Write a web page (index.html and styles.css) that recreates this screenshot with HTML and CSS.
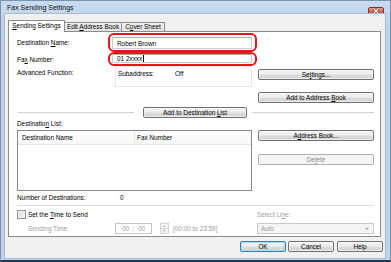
FILE: index.html
```html
<!DOCTYPE html>
<html>
<head>
<meta charset="utf-8">
<link rel="stylesheet" href="styles.css">
</head>
<body>
<div class="window">
  <div class="titlebar">
    <span class="title">Fax Sending Settings</span>
    <span class="close">
      <svg width="16" height="8" viewBox="0 0 16 8">
        <defs><linearGradient id="cg" x1="0" y1="0" x2="0" y2="1"><stop offset="0" stop-color="#e9a99c"/><stop offset="0.5" stop-color="#d66a5a"/><stop offset="1" stop-color="#c44a3a"/></linearGradient></defs>
        <rect x="0.5" y="0.5" width="15" height="7" rx="1.5" fill="url(#cg)" stroke="#7a3630"/>
        <path d="M6 2 L10 6 M10 2 L6 6" stroke="#3d1a16" stroke-width="2.2"/>
        <path d="M6 2 L10 6 M10 2 L6 6" stroke="#ffffff" stroke-width="1.2"/>
      </svg>
    </span>
  </div>
  <div class="frame-body">
    <div class="client">
      <div class="tabs">
        <div class="tab active"><u>S</u>ending Settings</div>
        <div class="tab t2">Edit <u>A</u>ddress Book</div>
        <div class="tab t3">C<u>o</u>ver Sheet</div>
      </div>
      <div class="panel">
        <div class="top">
          <div class="top-left">
            <div class="row row1">
              <span class="lbl l91">Destination <u>N</u>ame:</span>
              <div class="hl hl1"><div class="input in1"><span>Robert Brown</span></div></div>
            </div>
            <div class="row row2">
              <span class="lbl l91">Fa<u>x</u> Number:</span>
              <div class="hl hl2"><div class="input in2"><span>01 2xxxx</span><span class="caret"></span></div></div>
            </div>
            <div class="row row3">
              <span class="lbl l98 pt">Advanced Function:</span>
              <div class="static"><span class="sub">Subaddress:</span><span>Off</span></div>
            </div>
          </div>
          <div class="top-right">
            <div class="btn"><span>Se<u>t</u>tings...</span></div>
            <div class="btn mt12"><span>Add to Address <u>B</u>ook</span></div>
          </div>
        </div>
        <div class="sep-row">
          <div class="line l1"></div>
          <div class="btn wide"><span>Add to Destination <u>L</u>ist</span></div>
          <div class="line l2"></div>
        </div>
        <div class="dl-label">Destinatio<u>n</u> List:</div>
        <div class="list-row">
          <div class="list">
            <div class="list-head">
              <span class="col1">Destination Name</span>
              <span class="col2">Fax Number</span>
            </div>
          </div>
          <div class="list-btns">
            <div class="btn"><span>A<u>d</u>dress Book...</span></div>
            <div class="btn disabled mt13"><span>De<u>l</u>ete</span></div>
          </div>
        </div>
        <div class="count-row"><span class="l103">Number of Destinations:</span><span>0</span></div>
        <div class="hsep"></div>
        <div class="bottom">
          <div class="bottom-left">
            <div class="check-row"><span class="check"></span><span>Set the <u>T</u>ime to Send</span></div>
            <div class="time-row">
              <span class="gray l98i">Sending Time:</span>
              <div class="timebox"><span>00 &nbsp;:&nbsp; 00</span></div>
              <div class="spin"><span class="up"></span><span class="dn"></span></div>
              <span class="gray range">[00:00 to 23:59]</span>
            </div>
          </div>
          <div class="bottom-right">
            <div class="gray sl">Select Li<u>n</u>e:</div>
            <div class="select"><span>Auto</span><span class="arrow"></span></div>
          </div>
        </div>
      </div>
      <div class="footer">
        <div class="btn fbtn ok"><span>OK</span></div>
        <div class="btn fbtn"><span>Cancel</span></div>
        <div class="btn fbtn help"><span>Help</span></div>
      </div>
    </div>
  </div>
</div>
</body>
</html>
```
FILE: styles.css
```css
* { box-sizing: border-box; margin: 0; padding: 0; }
html, body { width: 391px; height: 262px; overflow: hidden; }
body {
  font-family: "Liberation Sans", Arial, sans-serif;
  font-size: 6.4px;
  color: #000;
  background: #fff;
}
u { text-decoration: underline; text-underline-offset: 1px; text-decoration-thickness: 0.6px; }

.window {
  width: 391px;
  height: 262px;
  display: flex;
  flex-direction: column;
  border: 1px solid #7d92ad;
  border-bottom: 2px solid #1f3550;
  background: linear-gradient(#c8dbf0, #bcd1ea 30px, #bfd3eb);
}
.titlebar {
  height: 13px;
  display: flex;
  align-items: flex-start;
  flex: none;
}
.title {
  padding-left: 6px;
  padding-top: 3px;
  font-size: 7px;
  line-height: 8px;
  color: #111;
}
.close {
  margin-left: auto;
  margin-right: 6px;
  margin-top: 6px;
  height: 8px;
  display: block;
}
.close svg { display: block; }

.frame-body {
  flex: 1;
  display: flex;
  padding: 0 5px 2px 4px;
}
.client {
  flex: 1;
  background: #f0f0f0;
  padding: 6px 0 0 3px;
  display: flex;
  flex-direction: column;
  box-shadow: 0 0 0 1px #a9bcd3;
}

.tabs {
  display: flex;
  align-items: flex-end;
  height: 11px;
  position: relative;
  z-index: 1;
}
.tab {
  height: 9px;
  line-height: 8px;
  text-align: center;
  border: 1px solid #898c95;
  border-bottom: none;
  background: linear-gradient(#f3f3f3, #e3e3e3);
  border-radius: 1px 1px 0 0;
}
.tab.active {
  width: 57px;
  height: 12px;
  line-height: 10px;
  margin-bottom: -1px;
  background: #fff;
}
.tab.t2 { width: 57px; border-left: none; }
.tab.t3 { width: 43px; border-left: none; }

.panel {
  width: 373px;
  height: 206px;
  border: 1px solid #898c95;
  background: #fff;
  padding: 1px 6px 0 8px;
}

.top { display: flex; }
.top-left { width: 240px; }
.top-right { width: 116px; margin-left: 1px; padding-top: 36px; }
.row { display: flex; align-items: center; }
.row1 { height: 19px; }
.row2 { height: 14px; }
.row3 { height: 21px; align-items: flex-start; }
.lbl { flex: none; }
.l91 { width: 91px; }
.l98 { width: 98px; }
.pt { padding-top: 3px; }
.hl {
  width: 149px;
  border: 2px solid #e8141b;
  border-radius: 6px;
}
.hl1 { height: 19px; padding: 2px 3px 1px 2px; }
.hl2 { height: 14px; padding: 0 3px 1px 2px; }
.input {
  width: 140px;
  background: #fff;
  border: 1px solid #c4cfdb;
  border-top-color: #abadb3;
  border-radius: 1px;
  padding-left: 4px;
  display: flex;
  align-items: center;
}
.in1 { height: 12px; }
.in2 { height: 9px; }
.caret { display: inline-block; width: 1px; height: 7px; background: #000; margin-left: 0.5px; }
.static {
  width: 137px;
  height: 21px;
  border: 1px solid #e4e4e4;
  padding: 3px 0 0 2px;
  display: flex;
  align-items: flex-start;
  line-height: 8px;
}
.sub { width: 57px; }

.btn {
  height: 11px;
  border: 1px solid #707070;
  border-radius: 2px;
  background: linear-gradient(#f4f4f4, #ececec 45%, #dcdcdc 55%, #d0d0d0);
  display: flex;
  align-items: center;
  justify-content: center;
  line-height: 8px;
  box-shadow: inset 0 0 0 1px rgba(255,255,255,0.6);
}
.mt12 { margin-top: 12px; }
.mt13 { margin-top: 13px; }
.btn.disabled {
  border-color: #adb2b5;
  background: #f4f4f4;
  color: #8b8b8b;
  box-shadow: none;
}

.sep-row {
  margin-top: 4px;
  height: 11px;
  display: flex;
  align-items: center;
}
.line { height: 1px; background: #d3d3d3; }
.l1 { width: 117px; margin-right: 9px; }
.btn.wide { width: 104px; }
.l2 { flex: 1; margin-left: 5px; }

.dl-label { margin-top: 1px; height: 9px; line-height: 9px; }

.list-row { margin-top: 2px; display: flex; }
.list {
  width: 235px;
  height: 61px;
  border: 1px solid #828790;
}
.list-head {
  height: 14px;
  display: flex;
  align-items: center;
  border-bottom: 1px solid #e5e5e5;
  background: linear-gradient(#ffffff, #f7f8fa);
}
.col1 {
  width: 117px;
  padding-left: 4px;
  border-right: 1px solid #e3e5e8;
  height: 13px;
  line-height: 13px;
}
.col2 { padding-left: 2px; }
.list-btns { width: 116px; margin-left: 6px; }

.count-row { margin-top: 2px; height: 9px; line-height: 9px; display: flex; }
.l103 { width: 103px; }
.hsep { margin-top: 3px; height: 1px; background: #d9dde2; }

.bottom { margin-top: 4px; display: flex; }
.bottom-left { width: 240px; }
.bottom-right { width: 117px; }
.check-row { height: 9px; display: flex; align-items: center; line-height: 9px; }
.check {
  width: 9px; height: 9px;
  border: 1px solid #8e8f8f;
  background: linear-gradient(135deg, #dcdcdc, #f6f6f6);
  box-shadow: inset 0 0 0 1px #f4f4f4;
  margin-right: 2px;
}
.gray { color: #9d9d9d; }
.time-row { margin-top: 4px; height: 11px; display: flex; align-items: center; }
.l98i { width: 98px; padding-left: 11px; }
.timebox {
  width: 37px; height: 11px;
  border: 1px solid #c3c7cc;
  color: #9d9d9d;
  display: flex; align-items: center; justify-content: center;
}
.spin {
  margin-left: 8px;
  width: 9px; height: 11px;
  display: flex; flex-direction: column;
}
.spin span {
  flex: 1;
  border: 1px solid #d4d4d4;
  background: #f2f2f2;
  position: relative;
}
.spin .dn { border-top: none; }
.spin .up::after, .spin .dn::after {
  content: "";
  position: absolute;
  left: 2px; top: 1px;
  border-left: 1.5px solid transparent;
  border-right: 1.5px solid transparent;
}
.spin .up::after { border-bottom: 2px solid #b0b0b0; }
.spin .dn::after { border-top: 2px solid #b0b0b0; }
.range { margin-left: 4px; }
.sl { height: 9px; line-height: 9px; }
.select {
  margin-top: 4px;
  height: 11px;
  border: 1px solid #c6cace;
  background: #f4f4f4;
  color: #9d9d9d;
  display: flex;
  align-items: center;
  padding-left: 3px;
  padding-right: 4px;
}
.arrow {
  margin-left: auto;
  border-left: 2px solid transparent;
  border-right: 2px solid transparent;
  border-top: 2px solid #a0a0a0;
}

.footer {
  margin-top: 4px;
  display: flex;
  justify-content: flex-end;
  gap: 2px;
  padding-right: 2px;
}
.fbtn { width: 46px; }
.fbtn.help { margin-left: 1px; }
.fbtn.ok {
  border-color: #3c7fb1;
  box-shadow: inset 0 0 0 1px #9fdcf5;
}
```
